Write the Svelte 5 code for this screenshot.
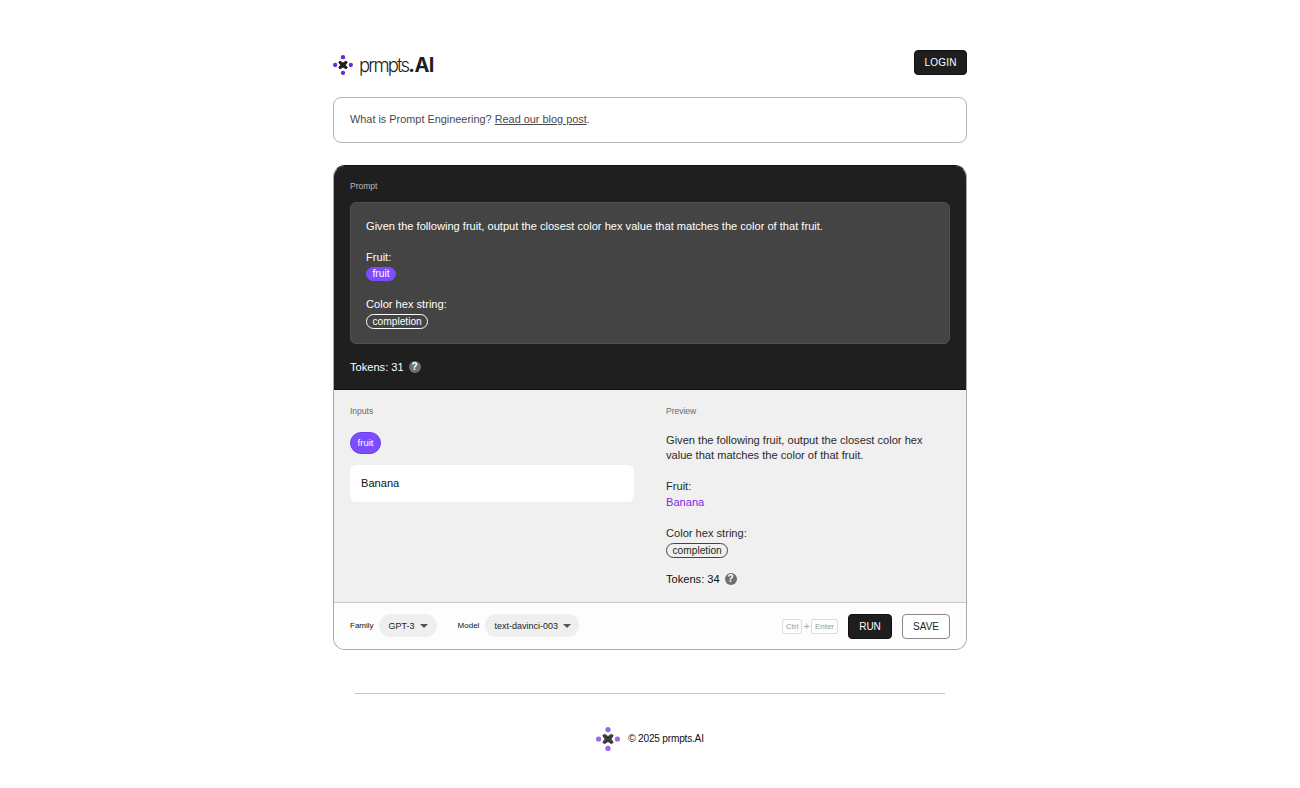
<script>
  let family = 'GPT-3';
  let model = 'text-davinci-003';
  let fruit = 'Banana';
</script>

{#snippet mark(cls)}
  <svg class={cls} viewBox="0 0 24 24" aria-hidden="true">
    <circle cx="12" cy="2.6" r="2.6" />
    <circle cx="12" cy="21.4" r="2.6" />
    <circle cx="2.6" cy="12" r="2.6" />
    <circle cx="21.4" cy="12" r="2.6" />
    <path class="cross" d="M8.4 7.2 12 9.6l3.6-2.4 1.6 1.6-2.4 3.2 2.4 3.2-1.6 1.6-3.6-2.4-3.6 2.4-1.6-1.6 2.4-3.2-2.4-3.2z" />
  </svg>
{/snippet}

{#snippet help()}
  <span class="help">?</span>
{/snippet}

<div class="page">
  <header class="top">
    <a class="brand" href="#home">
      {@render mark('mark-small')}
      <span class="brand-name">prmpts<b>.AI</b></span>
    </a>
    <button class="btn dark login">LOGIN</button>
  </header>

  <div class="notice">
    <span>What is Prompt Engineering? <a href="#blog">Read our blog post</a>.</span>
  </div>

  <main class="card">
    <section class="prompt">
      <div class="label">Prompt</div>
      <div class="editor">
        <p>Given the following fruit, output the closest color hex value that matches the color of that fruit.</p>
        <p>Fruit:<br /><span class="chip fill">fruit</span></p>
        <p>Color hex string:<br /><span class="chip outline">completion</span></p>
      </div>
      <div class="tokens">Tokens: 31 {@render help()}</div>
    </section>

    <section class="lower">
      <div class="inputs">
        <div class="label">Inputs</div>
        <span class="var-pill">fruit</span>
        <input class="var-input" bind:value={fruit} />
      </div>
      <div class="preview">
        <div class="label">Preview</div>
        <p class="first">Given the following fruit, output the closest color hex value that matches the color of that fruit.</p>
        <p>Fruit:<br /><span class="value">{fruit}</span></p>
        <p>Color hex string:<br /><span class="chip outline light">completion</span></p>
        <div class="tokens">Tokens: 34 {@render help()}</div>
      </div>
    </section>

    <section class="toolbar">
      <div class="field">
        <span class="field-label">Family</span>
        <span class="select">{family}<i class="caret"></i></span>
      </div>
      <div class="field second">
        <span class="field-label">Model</span>
        <span class="select">{model}<i class="caret"></i></span>
      </div>
      <div class="actions">
        <span class="keys"><kbd>Ctrl</kbd><span class="plus">+</span><kbd>Enter</kbd></span>
        <button class="btn dark run">RUN</button>
        <button class="btn ghost">SAVE</button>
      </div>
    </section>
  </main>

  <footer class="foot">
    <hr />
    <div class="foot-row">
      {@render mark('mark-large')}
      <span class="copy">© 2025 prmpts.AI</span>
    </div>
  </footer>
</div>

<style>
  :global(body) {
    margin: 0;
    background: #fff;
    font-family: "Liberation Sans", Arial, sans-serif;
    color: #1e1e1e;
  }

  .page {
    width: 634px;
    margin: 0 auto;
    padding-top: 50px;
  }

  .top {
    display: flex;
    justify-content: space-between;
    align-items: flex-start;
    height: 47px;
  }

  .brand {
    display: flex;
    align-items: center;
    gap: 6px;
    margin-top: 5px;
    color: #1e1e1e;
    text-decoration: none;
  }

  .mark-small {
    width: 20px;
    height: 20px;
    fill: #6d28d9;
  }

  .mark-large {
    width: 24px;
    height: 24px;
    fill: #9566ee;
  }

  .cross {
    fill: #1e1e1e;
    stroke: #1e1e1e;
    stroke-linejoin: round;
  }

  .mark-large .cross {
    fill: #3a3a3a;
    stroke: #3a3a3a;
  }

  .brand-name {
    font-family: Inter, sans-serif;
    font-size: 18.5px;
    font-weight: 300;
    letter-spacing: -1.8px;
    line-height: 20px;
  }

  .brand-name b {
    font-size: 20px;
    font-weight: 700;
    letter-spacing: -0.6px;
  }

  .btn {
    font-family: inherit;
    font-size: 10px;
    border-radius: 4px;
    cursor: pointer;
    box-sizing: border-box;
    padding: 0;
    height: 25px;
  }

  .btn.dark {
    background: #1e1e1e;
    color: #fff;
    border: 1px solid #111;
  }

  .btn.ghost {
    background: #fff;
    color: #1e1e1e;
    border: 1px solid #888;
    width: 48px;
  }

  .login {
    width: 53px;
    letter-spacing: 0.2px;
  }

  .run {
    width: 44px;
  }

  .notice {
    height: 46px;
    box-sizing: border-box;
    border: 1px solid #b4b4b4;
    border-radius: 8px;
    padding: 0 16px 2px;
    display: flex;
    align-items: center;
    font-size: 10.9px;
    color: #4a4a4a;
  }

  .notice a {
    color: #4a4a4a;
  }

  .card {
    margin-top: 22px;
    border: 1px solid #aaa;
    border-top-color: #111;
    border-radius: 12px;
    overflow: hidden;
    font-size: 11.1px;
  }

  .label {
    font-size: 8.5px;
    line-height: 10px;
  }

  .prompt {
    background: #1f1f1f;
    color: #fff;
    padding: 15px 16px 0;
    height: 224px;
    box-sizing: border-box;
    border-bottom: 1px solid #111;
  }

  .prompt .label {
    color: #bdbdbd;
  }

  .editor {
    margin-top: 11px;
    height: 142px;
    box-sizing: border-box;
    background: #444;
    border: 1px solid #505050;
    border-radius: 6px;
    padding: 16px 15px;
    line-height: 15.6px;
  }

  .editor p,
  .preview p {
    margin: 0 0 15.6px;
  }

  .chip {
    display: inline-block;
    padding: 0 5.5px;
    border-radius: 9px;
    line-height: 13px;
    font-size: 10.2px;
    vertical-align: top;
    margin-top: 1px;
  }

  .chip.fill {
    border: 1px solid #7c4dff;
    background: #7c4dff;
    color: #fff;
    line-height: 12px;
  }

  .chip.outline {
    border: 1px solid #fff;
    color: #fff;
  }

  .chip.outline.light {
    border-color: #444;
    color: #1e1e1e;
  }

  .tokens {
    display: flex;
    align-items: center;
    gap: 5px;
    line-height: 14px;
  }

  .prompt .tokens {
    margin-top: 16px;
  }

  .help {
    width: 12px;
    height: 12px;
    border-radius: 50%;
    background: #6f6f6f;
    color: #fff;
    font-size: 10px;
    font-weight: 700;
    line-height: 12px;
    text-align: center;
  }

  .lower {
    background: #f0f0f0;
    height: 213px;
    box-sizing: border-box;
    padding: 16px 16px 0;
    display: grid;
    grid-template-columns: 284px 284px;
    gap: 32px;
    border-bottom: 1px solid #c8c8c8;
  }

  .inputs .label,
  .preview .label {
    color: #6a6a6a;
  }

  .var-pill {
    display: block;
    box-sizing: border-box;
    width: 31px;
    height: 22px;
    margin-top: 16px;
    border: 1px solid #6a3ff0;
    border-radius: 11px;
    background: #7c4dff;
    color: #fff;
    font-size: 9.5px;
    line-height: 20px;
    text-align: center;
  }

  .var-input {
    display: block;
    width: 100%;
    height: 37px;
    margin-top: 11px;
    box-sizing: border-box;
    border: none;
    border-radius: 6px;
    background: #fff;
    padding: 0 11px 2px;
    font-family: inherit;
    font-size: 11.1px;
    color: #111;
    outline: none;
  }

  .preview {
    line-height: 15.6px;
    color: #2a2a2a;
  }

  .preview p.first {
    margin-top: 16.6px;
  }

  .value {
    color: #7c2ae8;
  }

  .preview .tokens {
    color: #111;
    margin-top: -1.6px;
  }

  .toolbar {
    height: 46px;
    box-sizing: border-box;
    background: #fdfdfd;
    padding: 0 16px;
    display: flex;
    align-items: center;
    font-size: 9px;
  }

  .field {
    display: flex;
    align-items: center;
    gap: 5px;
    margin-bottom: 1px;
  }

  .field.second {
    margin-left: 21px;
    gap: 6px;
  }

  .field.second .select {
    padding: 0 8px 0 9px;
  }

  .field-label {
    font-size: 8px;
    color: #111;
  }

  .select {
    display: flex;
    align-items: center;
    gap: 5px;
    height: 23px;
    padding: 0 9px 0 10px;
    border-radius: 12px;
    background: #efefef;
    color: #222;
  }

  .caret {
    width: 0;
    height: 0;
    border-left: 4px solid transparent;
    border-right: 4px solid transparent;
    border-top: 4px solid #555;
  }

  .actions {
    margin-left: auto;
    display: flex;
    align-items: center;
    gap: 10px;
  }

  .keys {
    display: flex;
    align-items: center;
    gap: 1px;
    color: #aaa;
  }

  .plus {
    font-size: 11px;
  }

  kbd {
    font-family: inherit;
    font-size: 8px;
    line-height: 13px;
    padding: 0 3px;
    border: 1px solid #ddd;
    border-radius: 2px;
    color: #999;
  }

  .foot {
    padding: 0 22px;
    margin-top: 43px;
  }

  .foot hr {
    margin: 0;
    border: none;
    border-top: 1px solid #c4c4c4;
  }

  .foot-row {
    margin-top: 33px;
    display: flex;
    justify-content: center;
    align-items: center;
    gap: 8px;
    font-size: 10.1px;
    letter-spacing: -0.2px;
    color: #111;
  }

  .copy {
    margin-bottom: 2px;
  }
</style>
